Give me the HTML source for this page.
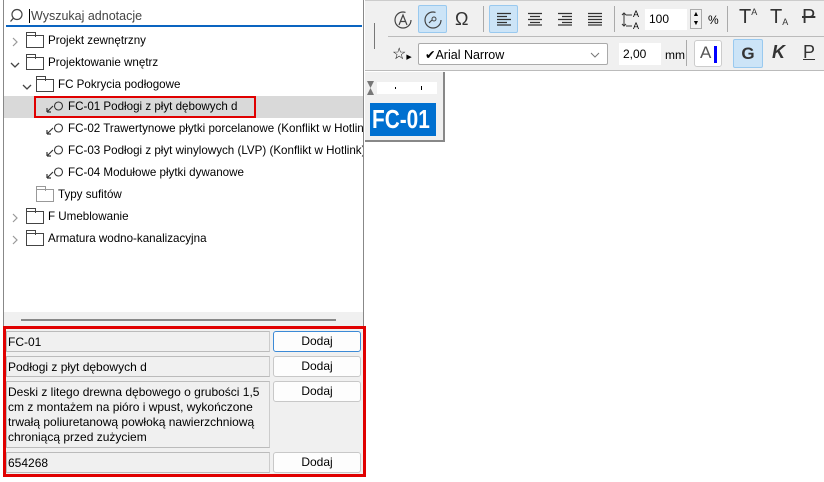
<!DOCTYPE html>
<html><head><meta charset="utf-8"><style>
*{margin:0;padding:0;box-sizing:border-box}
body{width:824px;height:482px;background:#fff;font-family:"Liberation Sans",sans-serif;font-size:12px;color:#000;position:relative;overflow:hidden}
.a{position:absolute}
.row{position:absolute;height:22px;line-height:22px;white-space:nowrap;font-size:11.6px}
.fold{position:absolute;width:18px;height:13px;border:1px solid #444;background:#fff}
.fold:before{content:"";position:absolute;left:-1px;top:-4px;width:8px;height:4px;border:1px solid #444;border-bottom:none}
.fold.l{border-color:#999}.fold.l:before{border-color:#999}
.fld{position:absolute;left:6px;width:264px;background:#f0f0f0;border:1px solid #bbb;border-right-color:#ccc;font-size:12px;padding:3px 1px;line-height:15px}
.btn{position:absolute;left:273px;width:88px;height:21px;border:1px solid #c8c8c8;border-radius:3px;background:#fdfdfd;text-align:center;line-height:19px;font-size:12px}
.tb{position:absolute;font-size:16px;color:#333}
</style></head><body>
<div class="a" style="left:3px;top:0;width:361px;height:312px;border-left:1px solid #888;border-right:1px solid #888;background:#fff"></div>
<div class="a" style="left:3px;top:312px;width:361px;height:15px;background:#f0f0f0;border-left:1px solid #888;border-right:1px solid #888"></div>
<div class="a" style="left:21px;top:319px;width:315px;height:2px;background:#888"></div>
<div class="a" style="left:6px;top:5px;width:356px;height:22px;border-bottom:2px solid #0a64c0;background:#fff"></div>
<svg class="a" style="left:10px;top:8px" width="16" height="16"><circle cx="7" cy="6.5" r="5" fill="none" stroke="#444" stroke-width="1.2"/><line x1="3.5" y1="10" x2="0.5" y2="13.5" stroke="#444" stroke-width="1.3"/></svg>
<div class="a" style="left:29px;top:9px;width:1px;height:14px;background:#000"></div>
<div class="a" style="left:31px;top:9px;font-size:12.5px;color:#444">Wyszukaj adnotacje</div>
<div class="a" style="left:4px;top:96px;width:359px;height:22px;background:#d9d9d9"></div>
<div class="a" style="left:34px;top:96px;width:222px;height:22px;border:2px solid #e00000"></div>
<div class="a" style="left:4px;top:30px;width:359px;height:220px;overflow:hidden">
<svg class="a" style="left:7px;top:7px" width="8" height="10"><path d="M2 1l4 4-4 4" fill="none" stroke="#999" stroke-width="1.2"/></svg>
<svg class="a" style="left:6px;top:31px" width="10" height="8"><path d="M1 2l4 4 4-4" fill="none" stroke="#444" stroke-width="1.3"/></svg>
<svg class="a" style="left:18px;top:53px" width="10" height="8"><path d="M1 2l4 4 4-4" fill="none" stroke="#444" stroke-width="1.3"/></svg>
<svg class="a" style="left:7px;top:205px" width="8" height="10"><path d="M2 1l4 4-4 4" fill="none" stroke="#999" stroke-width="1.2"/></svg>
<svg class="a" style="left:7px;top:183px" width="8" height="10"><path d="M2 1l4 4-4 4" fill="none" stroke="#999" stroke-width="1.2"/></svg>
<div class="fold" style="left:22px;top:5px"></div>
<div class="fold" style="left:22px;top:27px"></div>
<div class="fold" style="left:32px;top:49px"></div>
<div class="fold l" style="left:32px;top:159px"></div>
<div class="fold" style="left:22px;top:181px"></div>
<div class="fold" style="left:22px;top:203px"></div>
<div class="row" style="top:0;left:44px">Projekt zewnętrzny</div>
<div class="row" style="top:22px;left:44px">Projektowanie wnętrz</div>
<div class="row" style="top:44px;left:54px">FC Pokrycia podłogowe</div>
<div class="row" style="top:66px;left:64px">FC-01 Podłogi z płyt dębowych d</div>
<div class="row" style="top:88px;left:64px">FC-02 Trawertynowe płytki porcelanowe (Konflikt w Hotlink</div>
<div class="row" style="top:110px;left:64px">FC-03 Podłogi z płyt winylowych (LVP) (Konflikt w Hotlink)</div>
<div class="row" style="top:132px;left:64px">FC-04 Modułowe płytki dywanowe</div>
<div class="row" style="top:154px;left:54px">Typy sufitów</div>
<div class="row" style="top:176px;left:44px">F Umeblowanie</div>
<div class="row" style="top:198px;left:44px">Armatura wodno-kanalizacyjna</div>
<svg class="a" style="left:42px;top:70px" width="20" height="14"><path d="M1 12l6-6M1 12h4M1 12V8" fill="none" stroke="#333" stroke-width="1.2"/><circle cx="12.5" cy="6" r="4" fill="none" stroke="#333" stroke-width="1.1"/></svg>
<svg class="a" style="left:42px;top:92px" width="20" height="14"><path d="M1 12l6-6M1 12h4M1 12V8" fill="none" stroke="#333" stroke-width="1.2"/><circle cx="12.5" cy="6" r="4" fill="none" stroke="#333" stroke-width="1.1"/></svg>
<svg class="a" style="left:42px;top:114px" width="20" height="14"><path d="M1 12l6-6M1 12h4M1 12V8" fill="none" stroke="#333" stroke-width="1.2"/><circle cx="12.5" cy="6" r="4" fill="none" stroke="#333" stroke-width="1.1"/></svg>
<svg class="a" style="left:42px;top:136px" width="20" height="14"><path d="M1 12l6-6M1 12h4M1 12V8" fill="none" stroke="#333" stroke-width="1.2"/><circle cx="12.5" cy="6" r="4" fill="none" stroke="#333" stroke-width="1.1"/></svg>
</div>
<div class="a" style="left:3px;top:326px;width:363px;height:151px;background:#f0f0f0;border:3px solid #e00000"></div>
<div class="fld" style="top:331px;height:21px">FC-01</div>
<div class="btn" style="top:331px;border-color:#3c8ad6">Dodaj</div>
<div class="fld" style="top:356px;height:21px">Podłogi z płyt dębowych d</div>
<div class="btn" style="top:356px">Dodaj</div>
<div class="fld" style="top:381px;height:67px">Deski z litego drewna dębowego o grubości 1,5 cm z montażem na pióro i wpust, wykończone trwałą poliuretanową powłoką nawierzchniową chroniącą przed zużyciem</div>
<div class="btn" style="top:381px">Dodaj</div>
<div class="fld" style="top:452px;height:21px">654268</div>
<div class="btn" style="top:452px">Dodaj</div>
<div class="a" style="left:365px;top:0;width:459px;height:71px;background:#f0f0f0;border-top:1px solid #ccc;border-bottom:1px solid #bbb"></div>
<div class="a" style="left:374px;top:23px;width:1px;height:26px;background:#777"></div>
<div class="a" style="left:388px;top:36px;width:436px;height:1px;background:#bbb"></div>
<div class="a" style="left:418px;top:5px;width:29px;height:28px;background:#cce4f7;border:1px solid #99c9ef;border-radius:2px"></div>
<div class="a" style="left:489px;top:5px;width:29px;height:28px;background:#cce4f7;border:1px solid #99c9ef;border-radius:2px"></div>
<svg class="a" style="left:393px;top:8px" width="20" height="22"><circle cx="10" cy="12" r="8" fill="none" stroke="#444" stroke-width="1.2" stroke-dasharray="40 10"/><path d="M6 17l4-10 4 10M7.5 13.5h5" fill="none" stroke="#444" stroke-width="1.2"/></svg>
<svg class="a" style="left:423px;top:8px" width="20" height="22"><circle cx="10" cy="12" r="8" fill="none" stroke="#444" stroke-width="1.2" stroke-dasharray="40 10"/><path d="M6 15l3-3" stroke="#444" stroke-width="1.2"/><circle cx="11" cy="11" r="2" fill="none" stroke="#444"/></svg>
<div class="tb" style="left:455px;top:9px;font-size:18px">Ω</div>
<svg class="a" style="left:496px;top:12px" width="16" height="14" stroke="#333" stroke-width="1.2"><path d="M1 1.5h14M1 4.5h10M1 7.5h14M1 10.5h10M1 13h14"/></svg>
<svg class="a" style="left:527px;top:12px" width="16" height="14" stroke="#333" stroke-width="1.2"><path d="M1 1.5h14M3 4.5h10M1 7.5h14M3 10.5h10M1 13h14"/></svg>
<svg class="a" style="left:557px;top:12px" width="16" height="14" stroke="#333" stroke-width="1.2"><path d="M1 1.5h14M5 4.5h10M1 7.5h14M5 10.5h10M1 13h14"/></svg>
<svg class="a" style="left:587px;top:12px" width="16" height="14" stroke="#333" stroke-width="1.2"><path d="M1 1.5h14M1 4.5h14M1 7.5h14M1 10.5h14M1 13h14"/></svg>
<div class="a" style="left:483px;top:6px;width:1px;height:26px;background:#aaa"></div>
<div class="a" style="left:614px;top:6px;width:1px;height:26px;background:#aaa"></div>
<div class="a" style="left:727px;top:6px;width:1px;height:26px;background:#aaa"></div>
<svg class="a" style="left:620px;top:8px" width="22" height="22"><path d="M4 5v13M2 7l2-2 2 2M2 16l2 2 2-2M6 7h6M6 18h6" fill="none" stroke="#333" stroke-width="1" /><text x="13" y="9" font-size="9" font-family="Liberation Sans">A</text><text x="13" y="21" font-size="9" font-family="Liberation Sans">A</text></svg>
<div class="a" style="left:645px;top:9px;width:42px;height:21px;background:#fff;padding:3px 4px">100</div>
<div class="a" style="left:690px;top:9px;width:12px;height:20px;border:1px solid #aaa;font-size:7px;line-height:9px;text-align:center">▲<br>▼</div>
<div class="a" style="left:708px;top:13px;font-size:12px">%</div>
<div class="tb" style="left:739px;top:6px;font-size:20px">T<span style="font-size:9px;position:relative;top:-8px">A</span></div>
<div class="tb" style="left:770px;top:6px;font-size:20px">T<span style="font-size:9px;position:relative;top:2px">A</span></div>
<div class="tb" style="left:802px;top:6px;font-size:20px;text-decoration:line-through">P</div>
<div class="a" style="left:392px;top:44px;font-size:16px">☆<span style="font-size:7px">▶</span></div>
<div class="a" style="left:418px;top:43px;width:190px;height:22px;background:#fff;border:1px solid #aaa;border-radius:2px;padding:3px 6px;font-size:12.5px">✔Arial Narrow<svg style="position:absolute;right:7px;top:8px" width="10" height="6"><path d="M1 1l4 4 4-4" fill="none" stroke="#777"/></svg></div>
<div class="a" style="left:619px;top:43px;width:42px;height:22px;background:#fff;padding:4px 4px">2,00</div>
<div class="a" style="left:665px;top:48px;font-size:12px">mm</div>
<div class="a" style="left:686px;top:40px;width:1px;height:26px;background:#aaa"></div>
<div class="a" style="left:694px;top:40px;width:28px;height:27px;background:#fff;border:1px solid #ccc;border-radius:3px;font-size:17px;color:#555;padding:2px 5px">A<span style="position:absolute;left:19px;top:5px;width:3px;height:17px;background:#00f"></span></div>
<div class="a" style="left:733px;top:39px;width:30px;height:29px;background:#cce4f7;border:1px solid #99c9ef;border-radius:2px;font-weight:bold;font-size:17px;text-align:center;line-height:27px;color:#333">G</div>
<div class="tb" style="left:772px;top:42px;font-size:18px;font-style:italic;font-weight:bold">K</div>
<div class="tb" style="left:803px;top:42px;font-size:18px;text-decoration:underline">P</div>
<div class="a" style="left:365px;top:72px;width:80px;height:70px;background:#f0f0f0;border-right:2px solid #888;border-bottom:2px solid #888"></div>
<svg class="a" style="left:366px;top:80px" width="9" height="16"><path d="M1 1h7L4.5 8 8 15H1l3.5-7z" fill="#777"/></svg>
<div class="a" style="left:377px;top:82px;width:60px;height:12px;background:#fff"></div>
<div class="a" style="left:395px;top:87px;width:1px;height:2px;background:#000"></div>
<div class="a" style="left:421px;top:86px;width:1px;height:4px;background:#000"></div>
<div class="a" style="left:370px;top:103px;width:66px;height:33px;background:#0070d0;overflow:hidden"><div style="color:#fff;font-weight:bold;font-size:26px;line-height:33px;white-space:nowrap;transform:scaleX(0.8);transform-origin:0 0;margin-left:2px">FC-01</div></div>
</body></html>
